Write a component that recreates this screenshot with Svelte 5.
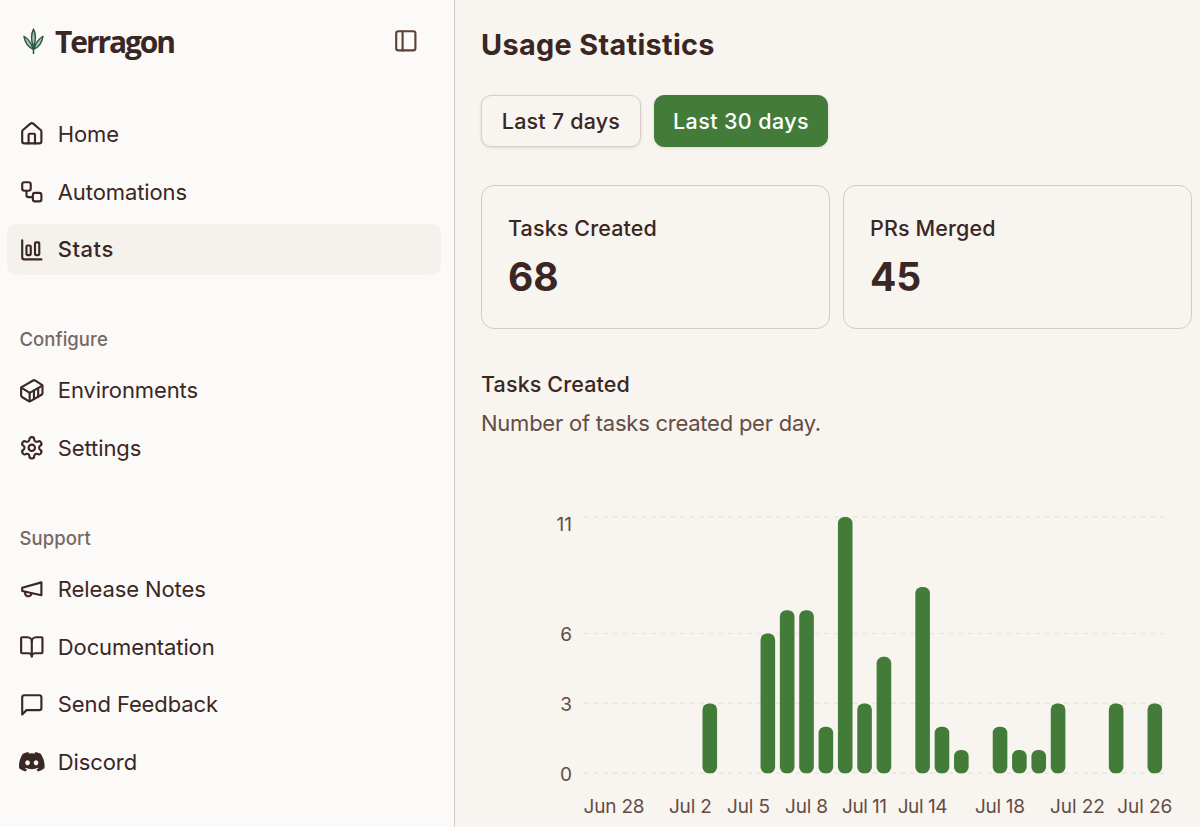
<script lang="ts">
  type Item = { label: string; icon: string; active?: boolean };

  const groups: { title?: string; items: Item[] }[] = [
    {
      items: [
        { label: "Home", icon: "home" },
        { label: "Automations", icon: "workflow" },
        { label: "Stats", icon: "chart", active: true },
      ],
    },
    {
      title: "Configure",
      items: [
        { label: "Environments", icon: "container" },
        { label: "Settings", icon: "settings" },
      ],
    },
    {
      title: "Support",
      items: [
        { label: "Release Notes", icon: "megaphone" },
        { label: "Documentation", icon: "book" },
        { label: "Send Feedback", icon: "message" },
        { label: "Discord", icon: "discord" },
      ],
    },
  ];

  const ICONS: Record<string, string[]> = {
    panel: ["M5 3h14a2 2 0 0 1 2 2v14a2 2 0 0 1-2 2H5a2 2 0 0 1-2-2V5a2 2 0 0 1 2-2z", "M9 3v18"],
    home: [
      "M15 21v-8a1 1 0 0 0-1-1h-4a1 1 0 0 0-1 1v8",
      "M3 10a2 2 0 0 1 .709-1.528l7-5.999a2 2 0 0 1 2.582 0l7 5.999A2 2 0 0 1 21 10v9a2 2 0 0 1-2 2H5a2 2 0 0 1-2-2z",
    ],
    workflow: [
      "M5 3h4a2 2 0 0 1 2 2v4a2 2 0 0 1-2 2H5a2 2 0 0 1-2-2V5a2 2 0 0 1 2-2z",
      "M7 11v4a2 2 0 0 0 2 2h4",
      "M15 13h4a2 2 0 0 1 2 2v4a2 2 0 0 1-2 2h-4a2 2 0 0 1-2-2v-4a2 2 0 0 1 2-2z",
    ],
    chart: [
      "M3 3v16a2 2 0 0 0 2 2h16",
      "M16 5h2a1 1 0 0 1 1 1v10a1 1 0 0 1-1 1h-2a1 1 0 0 1-1-1V6a1 1 0 0 1 1-1z",
      "M8 8h2a1 1 0 0 1 1 1v7a1 1 0 0 1-1 1H8a1 1 0 0 1-1-1V9a1 1 0 0 1 1-1z",
    ],
    container: [
      "M22 7.7c0-.6-.4-1.2-.8-1.5l-6.3-3.9a1.72 1.72 0 0 0-1.7 0l-10.3 6c-.5.2-.9.8-.9 1.4v6.6c0 .5.4 1.2.8 1.5l6.3 3.9a1.72 1.72 0 0 0 1.7 0l10.3-6c.5-.3.9-1 .9-1.5Z",
      "M10 21.9V14L2.1 9.1",
      "m10 14 11.9-6.9",
      "M14 19.8v-8.1",
      "M18 17.5V9.4",
    ],
    settings: [
      "M12.22 2h-.44a2 2 0 0 0-2 2v.18a2 2 0 0 1-1 1.73l-.43.25a2 2 0 0 1-2 0l-.15-.08a2 2 0 0 0-2.73.73l-.22.38a2 2 0 0 0 .73 2.73l.15.1a2 2 0 0 1 1 1.72v.51a2 2 0 0 1-1 1.74l-.15.09a2 2 0 0 0-.73 2.73l.22.38a2 2 0 0 0 2.73.73l.15-.08a2 2 0 0 1 2 0l.43.25a2 2 0 0 1 1 1.73V20a2 2 0 0 0 2 2h.44a2 2 0 0 0 2-2v-.18a2 2 0 0 1 1-1.73l.43-.25a2 2 0 0 1 2 0l.15.08a2 2 0 0 0 2.73-.73l.22-.39a2 2 0 0 0-.73-2.73l-.15-.08a2 2 0 0 1-1-1.74v-.5a2 2 0 0 1 1-1.74l.15-.09a2 2 0 0 0 .73-2.73l-.22-.38a2 2 0 0 0-2.73-.73l-.15.08a2 2 0 0 1-2 0l-.43-.25a2 2 0 0 1-1-1.73V4a2 2 0 0 0-2-2z",
      "M15 12a3 3 0 1 1-6 0 3 3 0 0 1 6 0z",
    ],
    megaphone: ["m3 11 18-5v12L3 14v-3z", "M11.6 16.8a3 3 0 1 1-5.8-1.6"],
    book: [
      "M12 7v14",
      "M3 18a1 1 0 0 1-1-1V4a1 1 0 0 1 1-1h5a4 4 0 0 1 4 4 4 4 0 0 1 4-4h5a1 1 0 0 1 1 1v13a1 1 0 0 1-1 1h-6a3 3 0 0 0-3 3 3 3 0 0 0-3-3z",
    ],
    message: ["M21 15a2 2 0 0 1-2 2H7l-4 4V5a2 2 0 0 1 2-2h14a2 2 0 0 1 2 2z"],
  };

  const stats = [
    { label: "Tasks Created", value: 68 },
    { label: "PRs Merged", value: 45 },
  ];

  // Tasks per day, starting on Jun 27
  const tasks = [
    0, 0, 0, 0, 0, 0, 3, 0, 0, 6, 7, 7, 2, 11, 3, 5, 0, 8, 2, 1, 0, 2, 1, 1, 3,
    0, 0, 3, 0, 3,
  ];

  const PLOT = { left: 103, right: 683.5, top: 17, bottom: 273.3 };
  const MAX = 11;
  const BAR_WIDTH = 14.6;
  const band = (PLOT.right - PLOT.left) / tasks.length;

  const x = (day: number) => PLOT.left + band * (day + 0.5);
  const y = (count: number) =>
    PLOT.bottom - (count / MAX) * (PLOT.bottom - PLOT.top);

  const yTicks = [
    { value: 0, dy: 0 },
    { value: 3, dy: 0 },
    { value: 6, dy: 0 },
    { value: 11, dy: 7 },
  ];

  const xTicks = [
    { label: "Jun 28", x: x(1) + 1, width: 61 },
    { label: "Jul 2", x: x(5), width: 43 },
    { label: "Jul 5", x: x(8), width: 43 },
    { label: "Jul 8", x: x(11), width: 43 },
    { label: "Jul 11", x: x(14), width: 45 },
    { label: "Jul 14", x: x(17), width: 50 },
    { label: "Jul 18", x: x(21), width: 50 },
    { label: "Jul 22", x: x(25), width: 55 },
    { label: "Jul 26", x: x(29) - 10, width: 55 },
  ];
</script>

{#snippet icon(name: string)}
  {#if name === "discord"}
    <svg class="icon filled" viewBox="0 0 24 24" aria-hidden="true">
      <path
        d="M20.317 4.37a19.79 19.79 0 0 0-4.885-1.515.074.074 0 0 0-.079.037c-.21.375-.444.864-.608 1.25a18.27 18.27 0 0 0-5.487 0 12.64 12.64 0 0 0-.617-1.25.077.077 0 0 0-.079-.037A19.736 19.736 0 0 0 3.677 4.37a.07.07 0 0 0-.032.027C.533 9.046-.32 13.58.099 18.057a.082.082 0 0 0 .031.057 19.9 19.9 0 0 0 5.993 3.03.078.078 0 0 0 .084-.028 14.09 14.09 0 0 0 1.226-1.994.076.076 0 0 0-.041-.106 13.107 13.107 0 0 1-1.872-.892.077.077 0 0 1-.008-.128 10.2 10.2 0 0 0 .372-.292.074.074 0 0 1 .077-.01c3.928 1.793 8.18 1.793 12.062 0a.074.074 0 0 1 .078.01c.12.098.246.198.373.292a.077.077 0 0 1-.006.127 12.299 12.299 0 0 1-1.873.892.077.077 0 0 0-.041.107c.36.698.772 1.362 1.225 1.993a.076.076 0 0 0 .084.028 19.839 19.839 0 0 0 6.002-3.03.077.077 0 0 0 .032-.054c.5-5.177-.838-9.674-3.549-13.66a.061.061 0 0 0-.031-.03zM8.02 15.33c-1.183 0-2.157-1.085-2.157-2.419 0-1.333.956-2.419 2.157-2.419 1.21 0 2.176 1.096 2.157 2.42 0 1.333-.956 2.418-2.157 2.418zm7.975 0c-1.183 0-2.157-1.085-2.157-2.419 0-1.333.955-2.419 2.157-2.419 1.21 0 2.176 1.096 2.157 2.42 0 1.333-.946 2.418-2.157 2.418z"
      />
    </svg>
  {:else}
    <svg class="icon" viewBox="0 0 24 24" aria-hidden="true">
      {#each ICONS[name] as d}
        <path {d} />
      {/each}
    </svg>
  {/if}
{/snippet}

<div class="app">
  <aside class="sidebar">
    <header class="brand">
      <svg class="logo" viewBox="0 0 22 28" aria-hidden="true">
        <path d="M11 1C8.2 6.5 8 12 11 20C14 12 13.8 6.5 11 1Z" />
        <path d="M1 8.5C2 15 4.8 19.5 10.4 22C9.2 16 6 11.5 1 8.5Z" />
        <path d="M21 8.5C20 15 17.2 19.5 11.6 22C12.8 16 16 11.5 21 8.5Z" />
        <path class="stem" d="M11 20V27" />
      </svg>
      <span class="name">Terragon</span>
      <button class="toggle" aria-label="Toggle sidebar">
        {@render icon("panel")}
      </button>
    </header>

    {#each groups as group}
      <nav class="group">
        {#if group.title}
          <h2>{group.title}</h2>
        {/if}
        {#each group.items as item}
          <div class="item" class:active={item.active}>
            {@render icon(item.icon)}
            <span>{item.label}</span>
          </div>
        {/each}
      </nav>
    {/each}
  </aside>

  <main>
    <h1>Usage Statistics</h1>

    <div class="ranges">
      <button class="range seven">Last 7 days</button>
      <button class="range selected">Last 30 days</button>
    </div>

    <div class="cards">
      {#each stats as stat}
        <div class="card">
          <div class="label">{stat.label}</div>
          <div class="value">{stat.value}</div>
        </div>
      {/each}
    </div>

    <h3>Tasks Created</h3>
    <p>Number of tasks created per day.</p>

    <svg class="chart" width="711" height="327" viewBox="0 0 711 327">
      {#each yTicks as tick}
        <line
          class="grid"
          x1={PLOT.left}
          x2={PLOT.right}
          y1={y(tick.value)}
          y2={y(tick.value)}
        />
        <text class="tick y" x="91" y={y(tick.value) + 7.2 + tick.dy}>
          {tick.value}
        </text>
      {/each}
      {#each tasks as count, day}
        {#if count > 0}
          <rect
            class="bar"
            x={x(day) - BAR_WIDTH / 2}
            y={y(count)}
            width={BAR_WIDTH}
            height={PLOT.bottom - y(count)}
            rx="6.4"
          />
        {/if}
      {/each}
      {#each xTicks as tick}
        <text
          class="tick x"
          x={tick.x - tick.width / 2}
          y="312.5"
          textLength={tick.width}
        >{tick.label}</text>
      {/each}
    </svg>
  </main>
</div>

<style>
  :global(body) {
    margin: 0;
    overflow: hidden;
  }

  .app {
    display: flex;
    width: 1200px;
    height: 827px;
    overflow: hidden;
    background: #f8f4ef;
    color: #3a2724;
    font-family: Inter, "Liberation Sans", sans-serif;
    font-size: 22px;
  }

  .sidebar {
    box-sizing: border-box;
    flex: none;
    width: 455px;
    padding: 0 13px 0 7px;
    background: #fcfaf8;
    border-right: 1px solid #d3cac5;
  }

  .brand {
    display: flex;
    align-items: center;
    height: 83px;
    padding: 0 22px 0 16px;
  }

  .logo {
    width: 21px;
    height: 27px;
    fill: #a9c2b4;
    stroke: #2d5547;
    stroke-width: 1.5;
    stroke-linejoin: round;
  }

  .stem {
    fill: none;
    stroke-width: 1.6;
  }

  .name {
    flex: 1;
    margin-left: 11px;
    font-family: "Open Sans", "Noto Sans", sans-serif;
    font-size: 30px;
    font-weight: 700;
    letter-spacing: -2.1px;
  }

  .toggle {
    display: flex;
    margin-bottom: 2px;
    padding: 0;
    border: 0;
    background: none;
    color: #5d4037;
  }

  .icon {
    flex: none;
    width: 25.6px;
    height: 25.6px;
    fill: none;
    stroke: currentColor;
    stroke-width: 2;
    stroke-linecap: round;
    stroke-linejoin: round;
  }

  .icon.filled {
    fill: currentColor;
    stroke: none;
  }

  .group {
    display: flex;
    flex-direction: column;
    gap: 6.5px;
    margin-bottom: 38.8px;
  }

  .brand + .group {
    margin-top: 25.4px;
  }

  .group h2 {
    display: flex;
    align-items: center;
    height: 51px;
    margin: 0 0 -6.5px;
    padding-left: 12.5px;
    color: #766762;
    font-size: 18.5px;
    font-weight: 500;
    letter-spacing: 0.05px;
  }

  .item {
    display: flex;
    align-items: center;
    gap: 12.8px;
    height: 51.2px;
    padding-left: 12.4px;
    border-radius: 10px;
    letter-spacing: -0.1px;
  }

  .item.active {
    background: #f5f1ed;
    font-weight: 500;
    letter-spacing: 0.5px;
  }

  main {
    flex: 1;
    min-width: 0;
    padding: 26px 8px 0 26px;
  }

  h1 {
    margin: 0;
    font-size: 28.8px;
    font-weight: 700;
    line-height: 38px;
    letter-spacing: 0.35px;
  }

  .ranges {
    display: flex;
    gap: 13px;
    margin-top: 31px;
  }

  .range {
    box-sizing: border-box;
    width: 174px;
    height: 52px;
    padding: 0;
    border: 1px solid #d9cec6;
    border-radius: 10px;
    background: #f8f4ef;
    box-shadow: 0 1px 3px rgba(58, 39, 36, 0.12);
    color: inherit;
    font: 500 21.5px Inter, "Liberation Sans", sans-serif;
    letter-spacing: 0.4px;
  }

  .range.seven {
    width: 160px;
    letter-spacing: 0.2px;
  }

  .range.selected {
    border-color: #437b39;
    background: #437b39;
    color: #fff;
  }

  .cards {
    display: grid;
    grid-template-columns: 1fr 1fr;
    gap: 13px;
    margin-top: 38px;
  }

  .card {
    box-sizing: border-box;
    height: 144px;
    padding: 26px;
    border: 1px solid #d9cabf;
    border-radius: 13px;
  }

  .label,
  h3 {
    margin: 0;
    font-size: 21.5px;
    font-weight: 500;
    line-height: 32px;
    letter-spacing: 0.13px;
  }

  .value {
    margin-top: 9px;
    font-size: 39px;
    font-weight: 700;
    line-height: 48px;
  }

  h3 {
    margin-top: 39px;
  }

  p {
    margin: 6.5px 0 61.5px;
    color: #654c44;
    line-height: 32px;
    letter-spacing: -0.24px;
  }

  .chart {
    display: block;
  }

  .grid {
    stroke: #ebe5df;
    stroke-width: 1.6;
    stroke-dasharray: 4.8 4.8;
  }

  .bar {
    fill: #437b39;
  }

  .tick {
    fill: #654c44;
    font-size: 19px;
  }

  .tick.y {
    text-anchor: end;
  }
</style>
